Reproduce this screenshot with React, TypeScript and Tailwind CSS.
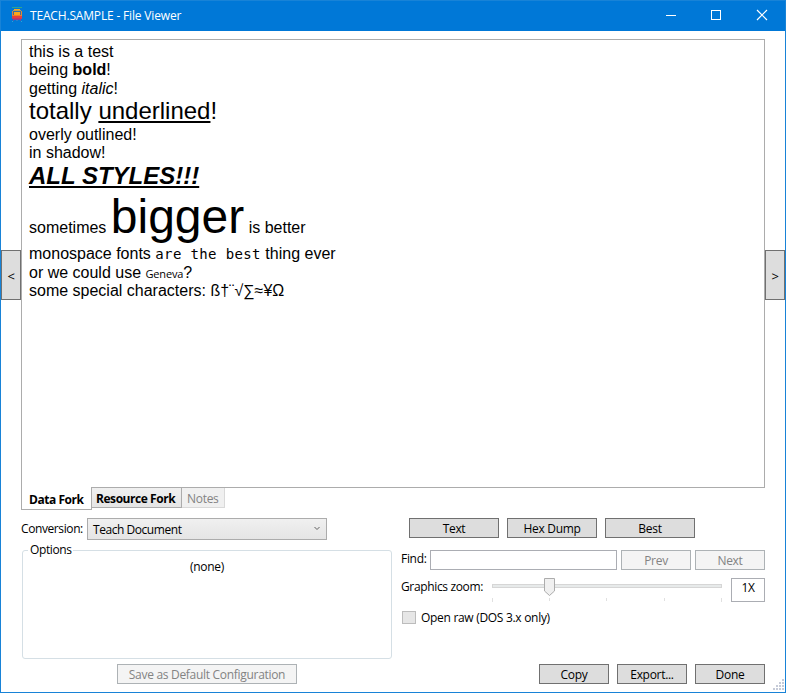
import type { ReactNode } from "react";

function Button({ children, className = "", disabled = false }: { children: ReactNode; className?: string; disabled?: boolean }) {
  return (
    <button
      className={`flex h-5 shrink-0 items-center justify-center border pt-px leading-none whitespace-nowrap ${
        disabled ? "border-[#adb2b5] bg-[#f4f4f4] text-[#838383]" : "border-[#707070] bg-[#dddddd] text-black"
      } ${className}`}
    >
      {children}
    </button>
  );
}

function AppIcon() {
  return (
    <svg width="16" height="16" viewBox="0 0 16 16" shapeRendering="crispEdges">
      <rect x="3" y="0" width="10" height="1" fill="#2fa58c" />
      <rect x="5" y="2" width="6" height="1" fill="#f5a623" />
      <rect x="4" y="3" width="8" height="1" fill="#c99a4a" />
      <rect x="3" y="4" width="1" height="5" fill="#d98a3c" />
      <rect x="12" y="4" width="1" height="5" fill="#d98a3c" />
      <rect x="4" y="4" width="8" height="1" fill="#2f6fa8" />
      <rect x="4" y="5" width="1" height="3" fill="#4a6a94" />
      <rect x="11" y="5" width="1" height="3" fill="#4a6a94" />
      <rect x="5" y="5" width="6" height="3" fill="#fba61c" />
      <rect x="4" y="8" width="8" height="1" fill="#f57c22" />
      <rect x="3" y="9" width="10" height="2" fill="#e4403c" />
      <rect x="3" y="11" width="10" height="1" fill="#c8385c" />
      <rect x="4" y="12" width="8" height="1" fill="#9c3c84" />
      <rect x="4" y="13" width="1" height="1" fill="#5a58a8" />
      <rect x="11" y="13" width="1" height="1" fill="#5a58a8" />
      <rect x="7" y="13" width="2" height="1" fill="#2b7fc9" />
      <rect x="3" y="14" width="1" height="1" fill="#2fa3d4" />
      <rect x="12" y="14" width="1" height="1" fill="#2fa3d4" />
    </svg>
  );
}

function TitleBar() {
  return (
    <header className="flex h-[30px] shrink-0 items-center bg-[#0078d7] text-white">
      <div className="ml-2 flex w-[21px] items-start pb-0.5">
        <AppIcon />
      </div>
      <h1 className="flex-1 text-[12px] leading-none tracking-[-0.17px]">TEACH.SAMPLE - File Viewer</h1>
      <svg width="120" height="30" viewBox="0 0 120 30" fill="none" stroke="white">
        <path d="M1 14.5h10" />
        <rect x="46.5" y="9.5" width="9" height="9" />
        <path d="M92 9l10 10M102 9l-10 10" strokeWidth="1.2" />
      </svg>
    </header>
  );
}

function Document() {
  return (
    <div className="pt-[3px] pl-[7px] font-['Liberation_Sans',Arial,sans-serif] text-[16px] leading-[18px] tracking-normal whitespace-pre text-black">
      <div className="h-[18px]">this is a test</div>
      <div className="h-[19px]">being <b>bold</b>!</div>
      <div className="h-[17px]">getting <i>italic</i>!</div>
      <div className="h-[29px] text-[24px] leading-[27px]">
        totally <span className="underline decoration-2 underline-offset-2">underlined</span>!
      </div>
      <div className="h-[18px]">overly outlined!</div>
      <div className="h-[18px]">in shadow!</div>
      <div className="h-[28px] text-[24px] leading-[27px]">
        <span className="font-bold italic underline decoration-2 underline-offset-2">ALL STYLES!!!</span>
      </div>
      <div className="h-[55px]">sometimes <span className="text-[48px] leading-[54px]">bigger</span> is better</div>
      <div className="h-[19px]">
        monospace fonts <span className="font-['DejaVu_Sans_Mono',monospace] text-[14px] leading-none tracking-[0.37px]">are the best</span> thing ever
      </div>
      <div className="h-[18px]">
        or we could use <span className="font-['Open_Sans',sans-serif] text-[11px] leading-none font-medium tracking-[-0.18px]">Geneva</span>?
      </div>
      <div>some special characters: ß†¨√∑≈¥Ω</div>
    </div>
  );
}

function Tabs() {
  return (
    <div className="flex items-start leading-none whitespace-nowrap">
      <div className="z-10 -mt-px flex h-[23px] w-[71px] items-center border border-t-0 border-[#acacac] bg-white pt-[3px] pl-[7px] font-bold tracking-[-0.45px]">Data Fork</div>
      <div className="-mt-px -ml-px flex h-[21px] w-[91px] items-center border border-[#acacac] bg-linear-to-b from-[#f0f0f0] to-[#e5e5e5] pt-[3px] pl-1 font-bold tracking-[-0.45px]">Resource Fork</div>
      <div className="flex h-5 w-[43px] items-center border border-t-0 border-l-0 border-[#d9d9d9] bg-[#f0f0f0] pt-[3px] pl-[5px] text-[#838383]">Notes</div>
    </div>
  );
}

function ZoomSlider() {
  return (
    <svg className="ml-2 shrink-0" width="232" height="24" viewBox="0 0 232 24">
      <rect x="1.5" y="6.5" width="229" height="3" fill="#e7eaea" stroke="#d6d6d6" />
      <path d="M1.5 20v4M58.5 20v3M115.5 20v3M173.5 20v3M230.5 20v4" stroke="#e0e0e0" />
      <path d="M53.5 .5h10v12.5l-5 4.5l-5-4.5z" fill="#f0f0f0" stroke="#acacac" />
    </svg>
  );
}

const GRIP = [[9, 0], [6, 3], [9, 3], [3, 6], [6, 6], [9, 6], [0, 9], [3, 9], [6, 9], [9, 9]];

export default function App() {
  return (
    <div className="relative flex h-[693px] w-[786px] flex-col overflow-hidden border border-[#1883d7] bg-white font-['Open_Sans','Noto_Sans',sans-serif] text-[12px] tracking-[-0.3px] text-black">
      <TitleBar />
      <div className="mt-2 flex h-[472px] shrink-0 items-center">
        <button className="h-[50px] w-5 shrink-0 border border-[#707070] bg-[#dddddd] pt-[3px] text-[13px]">&lt;</button>
        <div className="h-full w-[744px]">
          <div className="h-[449px] border border-[#acacac] bg-white">
            <Document />
          </div>
          <Tabs />
        </div>
        <button className="h-[50px] w-5 shrink-0 border border-[#707070] bg-[#dddddd] pt-[3px] text-[13px]">&gt;</button>
      </div>

      <main className="mt-[7px] flex h-[166px] shrink-0 pl-5">
        <section className="flex w-[371px] flex-col">
          <div className="flex h-[22px] items-center">
            <span className="w-[66px] leading-none tracking-[-0.4px]">Conversion:</span>
            <div className="flex h-[22px] w-[240px] items-center justify-between border border-[#acacac] bg-linear-to-b from-[#f0f0f0] to-[#e5e5e5] pt-px pr-[5px] pl-[5px] leading-none tracking-[-0.45px]">
              Teach Document
              <svg className="-mt-0.5" width="8" height="6" viewBox="0 0 8 6" fill="none" stroke="#606060">
                <path d="M1.5 1l2.5 2.5l2.5-2.5" />
              </svg>
            </div>
          </div>
          <fieldset className="mt-[2px] ml-px h-[117px] rounded-[3px] border border-[#d5dfe5] pl-[5px]">
            <legend className="h-4 px-[2px] leading-4 tracking-[-0.4px]">Options</legend>
            <div className="-ml-[5px] pt-px text-center leading-4">(none)</div>
          </fieldset>
          <Button disabled className="mt-[5px] ml-24 w-[180px]">Save as Default Configuration</Button>
        </section>

        <section className="ml-[9px] flex w-[364px] flex-col">
          <div className="flex gap-2 pl-2">
            <Button className="w-[90px]">Text</Button>
            <Button className="w-[90px]">Hex Dump</Button>
            <Button className="w-[90px]">Best</Button>
          </div>
          <div className="mt-3 flex">
            <span className="w-[29px] leading-[18px]">Find:</span>
            <div className="h-5 w-[187px] border border-[#abadb3] bg-white" />
            <Button disabled className="ml-1 w-[70px]">Prev</Button>
            <Button disabled className="ml-1 w-[70px]">Next</Button>
          </div>
          <div className="mt-2 flex h-6">
            <span className="w-[82px] leading-[18px] tracking-[-0.35px] whitespace-nowrap">Graphics zoom:</span>
            <ZoomSlider />
            <div className="ml-2 h-6 w-[34px] shrink-0 border border-[#abadb3] text-center leading-[18px]">1X</div>
          </div>
          <div className="mt-[9px] ml-px flex h-[13px] items-center">
            <span className="h-[13px] w-[14px] border border-[#bcbcbc] bg-[#e6e6e6]" />
            <span className="ml-[5px] pt-px leading-none">Open raw (DOS 3.x only)</span>
          </div>
          <div className="mt-10 flex justify-end gap-2">
            <Button className="w-[70px]">Copy</Button>
            <Button className="w-[70px]">Export...</Button>
            <Button className="w-[70px]">Done</Button>
          </div>
        </section>
      </main>

      <svg className="absolute right-px bottom-[2px]" width="11" height="11" viewBox="0 0 11 11" fill="#c6cbd8">
        {GRIP.map(([x, y]) => (
          <rect key={`${x}-${y}`} x={x} y={y} width="2" height="2" />
        ))}
      </svg>
    </div>
  );
}
